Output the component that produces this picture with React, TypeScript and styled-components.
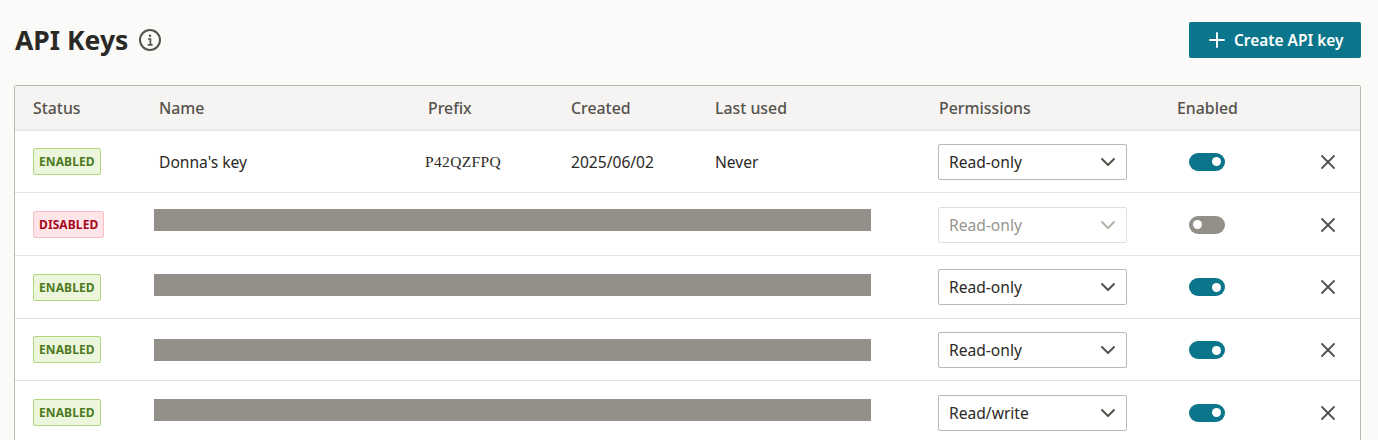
import { ChevronDown, Plus, X } from "lucide-react";
import styled, { createGlobalStyle } from "styled-components";

const COLUMNS = "126px 269px 143px 144px 224px 238px 60px 1fr";

const GlobalStyle = createGlobalStyle`
  html, body {
    margin: 0;
    height: 440px;
    overflow: hidden;
    background-color: #fafaf8;
    font-family: "Noto Sans", "Open Sans", sans-serif;
    color: #2b2926;
  }
`;

const Page = styled.div`
  padding: 22px 17px 0 14px;
`;

const TopBar = styled.div`
  display: flex;
  justify-content: space-between;
  align-items: center;
  height: 36px;
  margin-bottom: 27px;
`;

const TitleGroup = styled.div`
  display: flex;
  align-items: center;
  gap: 10px;
  padding-left: 1px;
`;

const Title = styled.h1`
  margin: 0;
  font-size: 26.5px;
  font-weight: 700;
  line-height: 36px;
  color: #2b2926;
`;

const InfoIcon = styled.svg`
  width: 24px;
  height: 24px;
  display: block;
`;

const CreateButton = styled.button`
  display: flex;
  align-items: center;
  gap: 5px;
  width: 172px;
  height: 36px;
  padding: 0 0 0 16px;
  border: none;
  border-radius: 2px;
  background-color: #0b768b;
  color: #fff;
  font-family: inherit;
  font-size: 15.45px;
  font-weight: 600;
  cursor: pointer;
`;

const Table = styled.div`
  border: 1px solid #bcb9b2;
  border-radius: 2px;
  background-color: #fff;
`;

const HeaderRow = styled.div`
  display: grid;
  grid-template-columns: ${COLUMNS};
  align-items: center;
  box-sizing: border-box;
  height: 44.3px;
  padding: 0 20px 0 18px;
  background-color: #f5f4f2;
  border-bottom: 1px solid #eeedea;
  box-shadow: 0 1px 0 #e3e2df;
  font-size: 15.85px;
  font-weight: 500;
  color: #55524d;
`;

const Row = styled.div`
  display: grid;
  grid-template-columns: ${COLUMNS};
  align-items: center;
  height: 62.75px;
  box-sizing: border-box;
  padding: 1.5px 20px 0 18px;
  border-bottom: 1px solid #e3e2df;
  font-size: 15.6px;
`;

const Badge = styled.span<{ $enabled: boolean }>`
  justify-self: start;
  box-sizing: border-box;
  height: 27px;
  margin-bottom: 0.8px;
  padding: 0 5px;
  display: flex;
  align-items: center;
  border-radius: 2px;
  font-size: 12px;
  font-weight: 700;
  letter-spacing: 0.1px;
  border: 1px solid ${(p) => (p.$enabled ? "#b0d77c" : "#f8bfc6")};
  background-color: ${(p) => (p.$enabled ? "#ebf6dc" : "#ffe5e8")};
  color: ${(p) => (p.$enabled ? "#4e7a1f" : "#a6091d")};
`;

const Prefix = styled.span`
  font-family: "Liberation Serif", "Liberation Mono", monospace;
  font-size: 15.5px;
  letter-spacing: 0.35px;
  line-height: 24px;
  margin-left: -3px;
`;

const Redacted = styled.div<{ $lift: number }>`
  grid-column: 2 / 6;
  width: 717px;
  height: 22px;
  margin-left: -5px;
  margin-bottom: ${(p) => p.$lift * 2}px;
  background-color: #918f88;
`;

const SelectBox = styled.div<{ $disabled: boolean }>`
  display: flex;
  align-items: center;
  justify-content: space-between;
  box-sizing: border-box;
  width: 189px;
  height: 36px;
  margin-left: -1px;
  padding: 0 6px 0 10px;
  border-radius: 2px;
  background-color: #fff;
  border: 1px solid ${(p) => (p.$disabled ? "#e0dfdc" : "#bcb9b2")};
  color: ${(p) => (p.$disabled ? "#969590" : "#2b2926")};
`;

const Toggle = styled.div<{ $on: boolean }>`
  display: flex;
  align-items: center;
  justify-content: ${(p) => (p.$on ? "flex-end" : "flex-start")};
  justify-self: center;
  box-sizing: border-box;
  width: 36px;
  height: 18px;
  padding: 0 4px;
  border-radius: 9px;
  background-color: ${(p) => (p.$on ? "#0b768b" : "#918f88")};
`;

const Knob = styled.span`
  width: 9px;
  height: 9px;
  border-radius: 50%;
  background-color: #fff;
`;

const RemoveCell = styled.div`
  display: flex;
  justify-content: flex-end;
  color: #55524d;
`;

type Key = {
  enabled: boolean;
  permission: string;
  lift: number;
};

const keys: Key[] = [
  { enabled: false, permission: "Read-only", lift: 5 },
  { enabled: true, permission: "Read-only", lift: 2 },
  { enabled: true, permission: "Read-only", lift: 0 },
  { enabled: true, permission: "Read/write", lift: 3 },
];

const Permission = ({ label, disabled }: { label: string; disabled: boolean }) => (
  <SelectBox $disabled={disabled}>
    {label}
    <ChevronDown size={24} strokeWidth={2} color={disabled ? "#b5b3ae" : "#55524d"} />
  </SelectBox>
);

const Remove = () => (
  <RemoveCell>
    <X size={24} strokeWidth={1.8} />
  </RemoveCell>
);

export default function App() {
  return (
    <Page>
      <GlobalStyle />
      <TopBar>
        <TitleGroup>
          <Title>API Keys</Title>
          <InfoIcon viewBox="0 0 24 24" fill="none" stroke="#55524d">
            <circle cx="12" cy="12" r="10" strokeWidth="2" />
            <path d="M10 11h2.4v5.6M9.8 16.8h4.8" strokeWidth="1.7" />
            <circle cx="12" cy="7.8" r="1.2" fill="#55524d" stroke="none" />
          </InfoIcon>
        </TitleGroup>
        <CreateButton>
          <Plus size={24} strokeWidth={1.9} />
          Create API key
        </CreateButton>
      </TopBar>
      <Table>
        <HeaderRow>
          <span>Status</span>
          <span>Name</span>
          <span>Prefix</span>
          <span>Created</span>
          <span>Last used</span>
          <span>Permissions</span>
          <span>Enabled</span>
        </HeaderRow>
        <Row>
          <Badge $enabled>ENABLED</Badge>
          <span>Donna's key</span>
          <Prefix>P42QZFPQ</Prefix>
          <span>2025/06/02</span>
          <span>Never</span>
          <Permission label="Read-only" disabled={false} />
          <Toggle $on>
            <Knob />
          </Toggle>
          <Remove />
        </Row>
        {keys.map((key, i) => (
          <Row key={i}>
            <Badge $enabled={key.enabled}>{key.enabled ? "ENABLED" : "DISABLED"}</Badge>
            <Redacted $lift={key.lift} />
            <Permission label={key.permission} disabled={!key.enabled} />
            <Toggle $on={key.enabled}>
              <Knob />
            </Toggle>
            <Remove />
          </Row>
        ))}
      </Table>
    </Page>
  );
}
